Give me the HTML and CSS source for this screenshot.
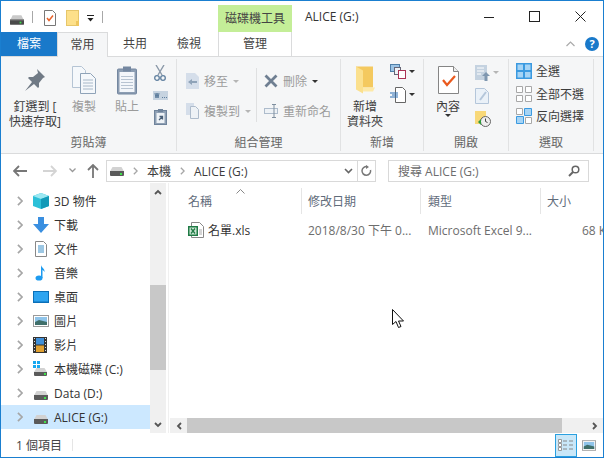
FILE: index.html
```html
<!DOCTYPE html>
<html>
<head>
    <title>ALICE (G:)</title>
    <link rel="stylesheet" href="styles.css">
</head>
<body>
    <svg class="defs" width="0" height="0">
        <symbol id="drive" viewBox="0 0 16 12">
            <path d="M3 1h10l3 6H0z" fill="#c9c9c9"/>
            <path d="M0 6h16v5a1 1 0 0 1-1 1H1a1 1 0 0 1-1-1z" fill="#4a4a4a"/>
            <path d="M0 6h16v1H0z" fill="#8a8a8a"/>
            <rect x="11" y="8.500" width="2" height="2" fill="#3fe04a"/>
        </symbol>
        <symbol id="chev" viewBox="0 0 7 12">
            <path d="M1 1l5 5-5 5" fill="none" stroke="#a6a6a6" stroke-width="2"/>
        </symbol>
        <symbol id="photo" viewBox="0 0 16 12">
            <rect x=".5" y=".5" width="15" height="11" fill="#fff" stroke="#9a9a9a"/>
            <rect x="2" y="2" width="12" height="8" fill="#8fc4ea"/>
            <path d="M2 7l4-2 8 2v3H2z" fill="#3f6f6a"/>
        </symbol>
        <symbol id="disk-body" viewBox="0 0 14 9">
            <path d="M2.500 0h9L14 4.500H0z" fill="#d2d2d2"/>
            <path d="M0 4h14v4a1 1 0 0 1-1 1H1a1 1 0 0 1-1-1z" fill="#5a5a5a"/>
            <rect x="10" y="6" width="2" height="2" fill="#3fe04a"/>
        </symbol>
    </svg>

    <div class="window">
        <div class="titlebar">
            <svg class="qa-drive" width="14" height="11"><use href="#drive"/></svg>
            <span class="qa-sep"></span>
            <svg class="qa-doc" width="12" height="16" viewBox="0 0 12 16">
                <path d="M.5.500h8l3 3v12H.5z" fill="#fff" stroke="#777"/>
                <path d="M3 8l2 2.500L9 5.500" fill="none" stroke="#e8622a" stroke-width="1.500"/>
            </svg>
            <svg class="qa-folder" width="13" height="16" viewBox="0 0 13 16">
                <rect x=".5" y=".5" width="12" height="15" fill="#fde08a" stroke="#e6c66a"/>
                <rect x="10" y="11" width="3" height="5" fill="#eec65e"/>
            </svg>
            <svg class="qa-drop" width="7" height="7" viewBox="0 0 7 7">
                <path d="M0 0h7v1H0zM.5 3h6L3.500 6.500z" fill="#222"/>
            </svg>
            <span class="qa-sep qa-sep-last"></span>
            <div class="tool-title">磁碟機工具</div>
            <div class="win-title">ALICE (G:)</div>
            <div class="win-controls">
                <svg width="10" height="10" viewBox="0 0 10 10"><path d="M0 5.500h10" stroke="#222"/></svg>
                <svg width="11" height="11" viewBox="0 0 11 11"><rect x=".5" y=".5" width="10" height="10" fill="none" stroke="#222"/></svg>
                <svg width="11" height="11" viewBox="0 0 11 11"><path d="M.5.500l10 10M10.500.500l-10 10" stroke="#222"/></svg>
            </div>
        </div>

        <div class="tabs">
            <div class="tab tab-file">檔案</div>
            <div class="tab tab-active">常用</div>
            <div class="tab tab-plain">共用</div>
            <div class="tab tab-plain">檢視</div>
            <div class="tab tab-tool">管理</div>
            <div class="tabs-right">
                <svg width="9" height="6" viewBox="0 0 9 6"><path d="M.5 5l4-4 4 4" fill="none" stroke="#aaa" stroke-width="1.200"/></svg>
                <div class="help">?</div>
            </div>
        </div>

        <div class="ribbon">
            <div class="group group-clip">
                <div class="group-body">
                    <div class="big big-pin">
                        <svg class="big-icon" width="22" height="22" viewBox="0 0 22 22">
                            <path d="M13 0l8 8-2 1-4 5v4l-1 1-4-4-9 7 7-9-4-4 1-1h4l5-4z" fill="#707a85"/>
                        </svg>
                        <div class="big-text">釘選到 [<br>快速存取]</div>
                    </div>
                    <div class="big big-copy dim">
                        <svg class="big-icon" width="24" height="28" viewBox="0 0 24 28">
                            <path d="M.5.500h9l4 4v17H.5z" fill="#f5f8fb" stroke="#b5c4d4"/>
                            <path d="M8.500 7.500h10l5 5v15h-15z" fill="#f5f8fb" stroke="#8fa3b8"/>
                            <path d="M11 14h10M11 17h10M11 20h10M11 23h10" stroke="#a8b8c8"/>
                        </svg>
                        <div class="big-text">複製</div>
                    </div>
                    <div class="big big-paste dim">
                        <svg class="big-icon" width="20" height="29" viewBox="0 0 20 29">
                            <rect x=".5" y="3.500" width="19" height="25" rx="1" fill="#8c9db2" stroke="#7487a0"/>
                            <rect x="2.500" y="6.500" width="15" height="20" fill="#f3f6fa"/>
                            <path d="M4 11h12M4 14h12M4 17h12M4 20h12M4 23h12" stroke="#b7c3d1"/>
                            <rect x="6" y="1" width="8" height="5" fill="#7487a0"/>
                        </svg>
                        <div class="big-text">貼上</div>
                    </div>
                    <div class="clip-tools">
                        <svg width="12" height="16" viewBox="0 0 12 16">
                            <path d="M2 0l6 10M10 0L4 10" stroke="#8a98a8" stroke-width="1.400"/>
                            <circle cx="3" cy="13" r="2.300" fill="none" stroke="#5f7f9f" stroke-width="1.300"/>
                            <circle cx="9" cy="13" r="2.300" fill="none" stroke="#5f7f9f" stroke-width="1.300"/>
                        </svg>
                        <svg width="15" height="9" viewBox="0 0 15 9">
                            <rect width="15" height="9" fill="#c6d3e0"/>
                            <path d="M2 2l1 5 1-5 1 5 1-5M9 6.500h1M11 6.500h1M13 6.500h1" fill="none" stroke="#44688c" stroke-width=".8"/>
                        </svg>
                        <svg width="13" height="16" viewBox="0 0 13 16">
                            <rect x=".5" y="1.500" width="12" height="14" fill="#8fa0b4" stroke="#6f839b"/>
                            <rect x="2.500" y="4" width="8" height="10" fill="#eef2f6"/>
                            <path d="M5 11l3-3M5.500 7.500H8.500v3" fill="none" stroke="#4a6078" stroke-width="1.300"/>
                            <rect x="4" y="0" width="5" height="3" fill="#6f839b"/>
                        </svg>
                    </div>
                </div>
                <div class="group-label">剪貼簿</div>
            </div>

            <div class="group group-org">
                <div class="group-body">
                    <div class="org-col">
                        <div class="small-row dim">
                            <svg width="13" height="16" viewBox="0 0 13 16">
                                <path d="M0 0h9l4 4v12H0z" fill="#d5deea"/>
                                <path d="M2 9l4-3v2h5v2H6v2z" fill="#8fa3b8"/>
                            </svg>
                            <span>移至</span><i class="caret caret-dim"></i>
                        </div>
                        <div class="small-row dim">
                            <svg width="13" height="16" viewBox="0 0 13 16">
                                <path d="M0 0h8v12H0z" fill="#d5deea"/>
                                <path d="M4.500 3.500h5l3 3v9h-8z" fill="#eef2f6" stroke="#aebccc"/>
                            </svg>
                            <span>複製到</span><i class="caret caret-dim"></i>
                        </div>
                    </div>
                    <span class="org-line"></span>
                    <div class="org-col org-col-right">
                        <div class="small-row dim">
                            <svg width="14" height="14" viewBox="0 0 14 14">
                                <path d="M1.500 1.500l11 11M12.500 1.500l-11 11" stroke="#6f7f92" stroke-width="2.800"/>
                            </svg>
                            <span>刪除</span><i class="caret"></i>
                        </div>
                        <div class="small-row dim">
                            <svg width="14" height="14" viewBox="0 0 14 14">
                                <rect x=".5" y="4.500" width="13" height="5" fill="#eef2f6" stroke="#aebccc"/>
                                <path d="M10 0v14M8 .5h4M8 13.500h4" stroke="#7f8f9f"/>
                            </svg>
                            <span>重新命名</span>
                        </div>
                    </div>
                </div>
                <div class="group-label">組合管理</div>
            </div>

            <div class="group group-new">
                <div class="group-body">
                    <div class="big big-48">
                        <svg class="big-icon" width="19" height="27" viewBox="0 0 19 27">
                            <path d="M0 0h17v21H0z" fill="#f4c95f"/>
                            <path d="M0 0l7 4v23l-7-4z" fill="#fbe08e"/>
                            <path d="M7 21h12l-2 4H7z" fill="#fde9a8"/>
                        </svg>
                        <div class="big-text">新增<br>資料夾</div>
                    </div>
                    <div class="small-col">
                        <div class="icon-row">
                            <svg width="16" height="15" viewBox="0 0 16 15">
                                <rect x=".5" y=".5" width="9" height="7" fill="#9cc4e6" stroke="#4f7fa8"/>
                                <rect x="4.500" y="3.500" width="6" height="7" fill="#eef2f6" stroke="#667"/>
                                <rect x="8.500" y="6.500" width="7" height="8" fill="#fff" stroke="#a35"/>
                            </svg>
                            <i class="caret"></i>
                        </div>
                        <div class="icon-row">
                            <svg width="16" height="16" viewBox="0 0 16 16">
                                <path d="M5.500.500h7l3 3v12h-10z" fill="#fff" stroke="#666"/>
                                <path d="M0 6h8M2 8h6M0 10h8" stroke="#2b6fb5"/>
                            </svg>
                            <i class="caret"></i>
                        </div>
                    </div>
                </div>
                <div class="group-label">新增</div>
            </div>

            <div class="group group-open">
                <div class="group-body">
                    <div class="big big-48">
                        <svg class="big-icon" width="21" height="28" viewBox="0 0 21 28">
                            <path d="M.5.500h15l5 5v22H.5z" fill="#fff" stroke="#858585"/>
                            <path d="M15.500.500v5h5" fill="#eee" stroke="#858585"/>
                            <path d="M5 14l4 5 8-9" fill="none" stroke="#ea5a1e" stroke-width="2.200"/>
                        </svg>
                        <div class="big-text">內容</div>
                        <i class="caret caret-under"></i>
                    </div>
                    <div class="small-col small-col-open">
                        <div class="icon-row dim">
                            <svg width="15" height="16" viewBox="0 0 15 16">
                                <rect width="12" height="15" fill="#c4d2e0"/>
                                <path d="M2 3h7M2 6h7M2 9h4" stroke="#fff"/>
                                <path d="M11 7l4 4h-2.500v5h-3v-5H7z" fill="#7f97b0"/>
                            </svg>
                            <i class="caret caret-dim"></i>
                        </div>
                        <div class="icon-row dim">
                            <svg width="14" height="16" viewBox="0 0 14 16">
                                <path d="M.5.500h9l4 4v11H.5z" fill="#eaf1f8" stroke="#b4c6da"/>
                                <path d="M5 12l6-8" stroke="#b4c6da" stroke-width="2"/>
                            </svg>
                        </div>
                        <div class="icon-row">
                            <svg width="16" height="16" viewBox="0 0 16 16">
                                <rect width="11" height="13" fill="#f8d878"/>
                                <circle cx="10.500" cy="10.500" r="5" fill="#eee" stroke="#666"/>
                                <path d="M10.500 7.500v3l2 1" fill="none" stroke="#444"/>
                                <path d="M3 11l3-3v6z" fill="#2e9a3e"/>
                            </svg>
                        </div>
                    </div>
                </div>
                <div class="group-label">開啟</div>
            </div>

            <div class="group group-select">
                <div class="group-body select-rows">
                    <div class="select-row">
                        <svg width="16" height="16" viewBox="0 0 16 16">
                            <path d="M0 0h16v16H0z" fill="#3b9ae0"/>
                            <path d="M1.500 1.500h5.500v5.500H1.500zM9 1.500h5.500v5.500H9zM1.500 9h5.500v5.500H1.500zM9 9h5.500v5.500H9z" fill="#a6d4f5"/>
                        </svg>
                        <span>全選</span>
                    </div>
                    <div class="select-row">
                        <svg width="16" height="16" viewBox="0 0 16 16">
                            <path d="M.5.500h6v6h-6zM9.500.500h6v6h-6zM.5 9.500h6v6h-6zM9.500 9.500h6v6h-6z" fill="#fff" stroke="#a8a8a8"/>
                        </svg>
                        <span>全部不選</span>
                    </div>
                    <div class="select-row">
                        <svg width="16" height="16" viewBox="0 0 16 16">
                            <path d="M.5.500h6v6h-6zM9.500 9.500h6v6h-6z" fill="#fff" stroke="#a8a8a8"/>
                            <path d="M8.500.500h7v7h-7zM.5 8.500h7v7h-7z" fill="#a6d4f5" stroke="#3b9ae0"/>
                        </svg>
                        <span>反向選擇</span>
                    </div>
                </div>
                <div class="group-label">選取</div>
            </div>
        </div>

        <div class="addressbar">
            <svg class="nav-back" width="14" height="12" viewBox="0 0 14 12"><path d="M6 1L1 6l5 5M1 6h13" fill="none" stroke="#777" stroke-width="1.800"/></svg>
            <svg class="nav-forward" width="14" height="12" viewBox="0 0 14 12"><path d="M8 1l5 5-5 5M13 6H0" fill="none" stroke="#d4d4d4" stroke-width="1.800"/></svg>
            <svg class="nav-down" width="7" height="5" viewBox="0 0 7 5"><path d="M.5.500l3 3 3-3" fill="none" stroke="#999" stroke-width="1.300"/></svg>
            <svg class="nav-up" width="12" height="14" viewBox="0 0 12 14"><path d="M1 6l5-5 5 5M6 1v13" fill="none" stroke="#777" stroke-width="1.800"/></svg>
            <div class="path-box">
                <svg class="path-drive" width="14" height="9"><use href="#disk-body"/></svg>
                <svg class="path-chev" width="5" height="8"><use href="#chev"/></svg>
                <span class="path-part">本機</span>
                <svg class="path-chev" width="5" height="8"><use href="#chev"/></svg>
                <span class="path-part">ALICE (G:)</span>
                <svg class="path-drop" width="9" height="6" viewBox="0 0 9 6"><path d="M1 1l3.500 3.500L8 1" fill="none" stroke="#666" stroke-width="1.600"/></svg>
                <div class="path-refresh">
                    <svg width="11" height="12" viewBox="0 0 11 12"><path d="M9.500 5a4.300 4.300 0 1 1-3-3.200" fill="none" stroke="#777" stroke-width="1.500"/><path d="M5 0l3 2-3 2z" fill="#777"/></svg>
                </div>
            </div>
            <div class="search-box">
                <span>搜尋 ALICE (G:)</span>
                <svg width="12" height="12" viewBox="0 0 12 12"><circle cx="7.500" cy="4.500" r="3.300" fill="none" stroke="#666" stroke-width="1.500"/><path d="M5 7l-4 4" stroke="#666" stroke-width="2"/></svg>
            </div>
        </div>

        <div class="main">
            <div class="tree">
                <div class="tree-row">
                    <svg width="6" height="10"><use href="#chev"/></svg>
                    <svg width="16" height="16" viewBox="0 0 16 16">
                        <path d="M8 0l8 3v10l-8 3-8-3V3z" fill="#2cc0d8"/>
                        <path d="M0 3l8 3 8-3-8-3z" fill="#9ce8f2"/>
                        <path d="M8 6v10l8-3V3z" fill="#129ab8"/>
                    </svg>
                    <span>3D 物件</span>
                </div>
                <div class="tree-row">
                    <svg width="6" height="10"><use href="#chev"/></svg>
                    <svg width="16" height="16" viewBox="0 0 16 16">
                        <path d="M5 0h6v7h5l-8 9-8-9h5z" fill="#3a8fe0"/>
                    </svg>
                    <span>下載</span>
                </div>
                <div class="tree-row">
                    <svg width="6" height="10"><use href="#chev"/></svg>
                    <svg width="16" height="16" viewBox="0 0 16 16">
                        <path d="M2.500.500h8l3 3v12h-11z" fill="#fff" stroke="#888"/>
                        <path d="M5 5h6M5 7h6M5 9h6M5 11h6" stroke="#3a8fc8"/>
                    </svg>
                    <span>文件</span>
                </div>
                <div class="tree-row">
                    <svg width="6" height="10"><use href="#chev"/></svg>
                    <svg width="16" height="16" viewBox="0 0 16 16">
                        <ellipse cx="6" cy="13" rx="3.500" ry="2.600" fill="#1d9bf0"/>
                        <path d="M8 13V0c.5 3 4 3.500 3.500 7C10 5 9.500 5 9.500 5v8z" fill="#1d9bf0"/>
                    </svg>
                    <span>音樂</span>
                </div>
                <div class="tree-row">
                    <svg width="6" height="10"><use href="#chev"/></svg>
                    <svg width="16" height="12" viewBox="0 0 16 12">
                        <rect width="16" height="12" fill="#0a6fb8"/>
                        <rect x="1" y="1" width="14" height="9.500" fill="#2ea4f0"/>
                    </svg>
                    <span>桌面</span>
                </div>
                <div class="tree-row">
                    <svg width="6" height="10"><use href="#chev"/></svg>
                    <svg width="16" height="12"><use href="#photo"/></svg>
                    <span>圖片</span>
                </div>
                <div class="tree-row">
                    <svg width="6" height="10"><use href="#chev"/></svg>
                    <svg width="14" height="16" viewBox="0 0 14 16">
                        <rect width="14" height="16" fill="#333"/>
                        <rect x="3" y="1" width="8" height="6.500" fill="#3f8fd8"/>
                        <rect x="3" y="8.500" width="8" height="6.500" fill="#e0a030"/>
                        <path d="M1 1.500h1M1 4.500h1M1 7.500h1M1 10.500h1M1 13.500h1M12 1.500h1M12 4.500h1M12 7.500h1M12 10.500h1M12 13.500h1" stroke="#ddd"/>
                    </svg>
                    <span>影片</span>
                </div>
                <div class="tree-row">
                    <svg width="6" height="10"><use href="#chev"/></svg>
                    <svg width="15" height="16" viewBox="0 0 15 16">
                        <path d="M0 0h3v3H0zM4 0h3v3H4zM0 4h3v3H0zM4 4h3v3H4z" fill="#18a8f0"/>
                        <path d="M3.500 7h8L14 11H1z" fill="#d2d2d2"/>
                        <path d="M1 11h13v3a1 1 0 0 1-1 1H2a1 1 0 0 1-1-1z" fill="#5a5a5a"/>
                        <rect x="11" y="12" width="2" height="2" fill="#3fe04a"/>
                    </svg>
                    <span>本機磁碟 (C:)</span>
                </div>
                <div class="tree-row">
                    <svg width="6" height="10"><use href="#chev"/></svg>
                    <svg class="tree-disk" width="14" height="9"><use href="#disk-body"/></svg>
                    <span>Data (D:)</span>
                </div>
                <div class="tree-row tree-row-on">
                    <svg width="6" height="10"><use href="#chev"/></svg>
                    <svg class="tree-disk" width="14" height="9"><use href="#disk-body"/></svg>
                    <span>ALICE (G:)</span>
                </div>
            </div>

            <div class="vscroll">
                <div class="vscroll-btn">
                    <svg width="8" height="6" viewBox="0 0 8 6"><path d="M1 5l3-3 3 3" fill="none" stroke="#555" stroke-width="1.800"/></svg>
                </div>
                <div class="vscroll-track"><div class="vscroll-thumb"></div></div>
                <div class="vscroll-btn">
                    <svg width="8" height="6" viewBox="0 0 8 6"><path d="M1 1l3 3 3-3" fill="none" stroke="#555" stroke-width="1.800"/></svg>
                </div>
            </div>

            <div class="content">
                <div class="list">
                    <div class="list-head">
                        <div class="col col-name">名稱</div>
                        <div class="col col-date">修改日期</div>
                        <div class="col col-type">類型</div>
                        <div class="col col-size">大小</div>
                        <svg class="sort-arrow" width="9" height="5" viewBox="0 0 9 5"><path d="M.5 4.500l4-4 4 4" fill="none" stroke="#888"/></svg>
                    </div>
                    <div class="list-row">
                        <div class="col col-name">
                            <svg width="16" height="16" viewBox="0 0 16 16">
                                <path d="M3.500.500h8l4 4v11h-12z" fill="#fff" stroke="#888"/>
                                <path d="M11 8h3M11 10h3M11 12h3" stroke="#aaa"/>
                                <rect y="4" width="10" height="10" fill="#1f7a45"/>
                                <rect x="1.500" y="5.500" width="7" height="7" fill="#cfe8d6"/>
                                <path d="M3 6.500l4 5M7 6.500l-4 5" stroke="#1f7a45" stroke-width="1.300"/>
                            </svg>
                            <span class="file-name">名單.xls</span>
                        </div>
                        <div class="col col-date">2018/8/30 下午 0...</div>
                        <div class="col col-type">Microsoft Excel 9...</div>
                        <div class="col col-size">68 KB</div>
                    </div>
                </div>
                <div class="hscroll">
                    <div class="hscroll-btn hscroll-left">
                        <svg width="6" height="8" viewBox="0 0 6 8"><path d="M5 1L2 4l3 3" fill="none" stroke="#555" stroke-width="1.800"/></svg>
                    </div>
                    <div class="hscroll-thumb"></div>
                    <div class="hscroll-btn hscroll-right">
                        <svg width="6" height="8" viewBox="0 0 6 8"><path d="M1 1l3 3-3 3" fill="none" stroke="#555" stroke-width="1.800"/></svg>
                    </div>
                </div>
            </div>
        </div>

        <div class="statusbar">
            <span class="status-text">1 個項目</span>
            <span class="status-line"></span>
            <div class="view-btn">
                <svg width="16" height="12" viewBox="0 0 16 12">
                    <path d="M.5.500h3v3h-3zM.5 4.500h3v3h-3zM.5 8.500h3v3h-3z" fill="#fff" stroke="#999"/>
                    <path d="M5 2h4M11 2h4M5 6h4M11 6h4M5 10h4M11 10h4" stroke="#888"/>
                </svg>
            </div>
            <svg class="view-photo" width="14" height="11"><use href="#photo"/></svg>
        </div>

        <svg class="cursor" width="13" height="20" viewBox="0 0 13 20">
            <path d="M.5.500v15l3.500-3 2.500 6 2.500-1-2.500-5.500h5z" fill="#fff" stroke="#111"/>
        </svg>
    </div>
</body>
</html>
```

FILE: styles.css
```css
* {
    box-sizing: border-box;
}

body {
    margin: 0;
    background: #fff;
    font-family: "Open Sans", "Noto Sans CJK TC", sans-serif;
    font-size: 12px;
    color: #3c3c3c;
}

svg {
    display: block;
    flex: none;
}

.defs {
    position: absolute;
}

.window {
    position: relative;
    width: 604px;
    height: 458px;
    border: 1px solid #1a7fd0;
    background: #fff;
    display: flex;
    flex-direction: column;
    overflow: hidden;
}

/* title bar */
.titlebar {
    height: 31px;
    display: flex;
    align-items: center;
    flex: none;
}

.qa-drive {
    margin: 5px 0 0 9px;
}

.qa-sep {
    width: 1px;
    height: 12px;
    margin: 0 0 0 8px;
    background: #a8a8a8;
}

.qa-doc {
    margin: 2px 0 0 11px;
}

.qa-folder {
    margin: 2px 0 0 10px;
}

.qa-drop {
    margin: 4px 0 0 8px;
}

.qa-sep-last {
    margin-left: 8px;
}

.tool-title {
    align-self: flex-end;
    width: 74px;
    height: 27px;
    margin-left: 115px;
    background: #c4ee98;
    text-align: center;
    line-height: 28px;
    color: #444;
}

.win-title {
    margin-left: 13px;
    color: #333;
}

.win-controls {
    margin-left: auto;
    width: 120px;
    padding: 0 17px 0 1px;
    display: flex;
    justify-content: space-between;
    align-items: center;
}

/* tabs */
.tabs {
    height: 24px;
    display: flex;
    flex: none;
}

.tab {
    text-align: center;
    line-height: 24px;
    color: #444;
}

.tab-file {
    width: 56px;
    background: #1979ca;
    color: #fff;
}

.tab-active {
    position: relative;
    z-index: 1;
    width: 51px;
    height: 25px;
    background: #f5f6f7;
    border: 1px solid #dadbdc;
    border-bottom: 0;
    line-height: 23px;
}

.tab-plain {
    width: 54px;
}

.tab-tool {
    width: 74px;
    margin-left: 2px;
    border-left: 1px solid #dadbdc;
    border-right: 1px solid #dadbdc;
}

.tabs-right {
    margin-left: auto;
    display: flex;
    align-items: center;
    gap: 10px;
    padding-right: 4px;
}

.help {
    width: 14px;
    height: 14px;
    border-radius: 50%;
    background: #1979ca;
    color: #fff;
    font-weight: bold;
    font-size: 11px;
    line-height: 14px;
    text-align: center;
}

/* ribbon */
.ribbon {
    height: 98px;
    flex: none;
    display: flex;
    background: #f5f6f7;
    border-top: 1px solid #dadbdc;
    border-bottom: 1px solid #dadbdc;
}

.group {
    margin: 2px 0;
    display: flex;
    flex-direction: column;
    border-right: 1px solid #e1e2e3;
}

.group-clip {
    width: 176px;
}

.group-org {
    width: 164px;
}

.group-new {
    width: 83px;
}

.group-open {
    width: 85px;
}

.group-select {
    width: 85px;
}

.group-body {
    flex: 1;
    display: flex;
    min-height: 0;
}

.group-label {
    height: 17px;
    line-height: 17px;
    text-align: center;
    color: #666;
}

.big {
    position: relative;
    display: flex;
    flex-direction: column;
    align-items: center;
    padding-top: 6px;
    text-align: center;
    line-height: 15px;
}

.big-icon {
    height: 30px;
    margin-bottom: 4px;
}

.big-pin {
    width: 68px;
}

.big-copy {
    width: 30px;
}

.big-paste {
    width: 30px;
    margin-left: 13px;
}

.big-48 {
    width: 48px;
}

.big-text {
    white-space: nowrap;
}

.dim {
    color: #9b9b9b;
}

.clip-tools {
    width: 20px;
    margin-left: 8px;
    padding-top: 6px;
    height: 66px;
    display: flex;
    flex-direction: column;
    align-items: center;
    justify-content: space-between;
}

.org-col {
    width: 79px;
    padding: 7px 0 0 9px;
}

.org-col-right {
    width: 83px;
    padding-left: 7px;
}

.org-line {
    width: 1px;
    height: 54px;
    margin-top: 9px;
    background: #dfe0e1;
}

.small-row {
    height: 30px;
    display: flex;
    align-items: center;
    gap: 5px;
    white-space: nowrap;
}

.caret {
    width: 0;
    height: 0;
    border-left: 3px solid transparent;
    border-right: 3px solid transparent;
    border-top: 3px solid #333;
}

.caret-dim {
    border-top-color: #b5b5b5;
}

.caret-under {
    position: absolute;
    top: 55px;
}

.small-col {
    margin-left: 1px;
    padding-top: 1px;
}

.small-col-open {
    margin-left: 3px;
    padding-top: 2px;
}

.icon-row {
    height: 23px;
    display: flex;
    align-items: center;
    gap: 3px;
}

.select-rows {
    flex-direction: column;
    padding: 1px 0 0 7px;
}

.select-row {
    height: 22.5px;
    display: flex;
    align-items: center;
    gap: 4px;
    white-space: nowrap;
}

/* address bar */
.addressbar {
    height: 29px;
    flex: none;
    padding-top: 6px;
    display: flex;
    align-items: flex-start;
}

.nav-back {
    margin: 5px 0 0 12px;
}

.nav-forward {
    margin: 5px 0 0 16px;
}

.nav-down {
    margin: 8px 0 0 12px;
}

.nav-up {
    margin: 4px 0 0 11px;
}

.path-box {
    width: 270px;
    height: 22px;
    margin-left: 7px;
    border: 1px solid #d9d9d9;
    display: flex;
    align-items: center;
}

.path-drive {
    margin-left: 3px;
}

.path-chev {
    margin: 0 9px;
}

.path-part {
    white-space: nowrap;
}

.path-drop {
    margin-left: auto;
    margin-right: 4px;
}

.path-refresh {
    width: 18px;
    height: 20px;
    border-left: 1px solid #d9d9d9;
    display: flex;
    align-items: center;
    justify-content: center;
}

.search-box {
    width: 201px;
    height: 22px;
    margin-left: 12px;
    padding: 0 8px 0 9px;
    border: 1px solid #d9d9d9;
    display: flex;
    align-items: center;
    justify-content: space-between;
    color: #6d6d6d;
}

/* main area */
.main {
    height: 250px;
    flex: none;
    display: flex;
}

.tree {
    width: 149px;
    padding-top: 6px;
    flex: none;
}

.tree-row {
    height: 24px;
    padding-left: 16px;
    display: grid;
    grid-template-columns: 16px 21px 1fr;
    align-items: center;
    white-space: nowrap;
    color: #333;
}

.tree-row-on {
    background: #cce8ff;
}

.tree-disk {
    margin: 4px 0 0 1px;
}

.vscroll {
    width: 16px;
    flex: none;
    background: #f0f0f0;
    display: flex;
    flex-direction: column;
}

.vscroll-btn {
    height: 17px;
    flex: none;
    display: flex;
    align-items: center;
    justify-content: center;
}

.vscroll-track {
    flex: 1;
    padding-top: 85px;
}

.vscroll-thumb {
    height: 85px;
    background: #c8c8c8;
}

.content {
    flex: 1;
    min-width: 0;
    margin-left: 2px;
    border-left: 1px solid #f0f0f0;
    display: flex;
    flex-direction: column;
    overflow: hidden;
}

.list {
    flex: 1;
    padding-top: 5px;
}

.list-head {
    position: relative;
    height: 26px;
    display: flex;
    color: #5f6b7a;
}

.list-head .col {
    padding-top: 1px;
    line-height: 26px;
    border-right: 1px solid #e5e5e5;
}

.list-row {
    height: 24px;
    margin-top: 4px;
    display: flex;
    align-items: center;
    color: #6d6d6d;
}

.col {
    flex: none;
    white-space: nowrap;
}

.col-name {
    width: 133px;
    padding-left: 19px;
    display: flex;
    align-items: center;
    gap: 4px;
}

.col-date {
    width: 119px;
    padding-left: 6px;
}

.col-type {
    width: 120px;
    padding-left: 7px;
}

.col-size {
    width: 62px;
    padding-left: 6px;
}

.list-row .col-size {
    padding-left: 41px;
}

.list-head .col-size {
    border-right: 0;
}

.file-name {
    color: #333;
}

.sort-arrow {
    position: absolute;
    left: 67px;
    top: 1px;
}

.hscroll {
    height: 15px;
    margin-left: 1px;
    flex: none;
    display: flex;
    background: #f0f0f0;
}

.hscroll-btn {
    display: flex;
    align-items: center;
}

.hscroll-left {
    width: 17px;
    justify-content: center;
}

.hscroll-thumb {
    width: 375px;
    background: #c8c8c8;
}

.hscroll-right {
    flex: 1;
    justify-content: flex-end;
    padding-right: 5px;
}

/* status bar */
.statusbar {
    flex: 1;
    display: flex;
    align-items: center;
    padding-left: 15px;
    color: #444;
}

.status-text {
    width: 56px;
    white-space: nowrap;
}

.status-line {
    width: 1px;
    height: 12px;
    background: #e5e5e5;
}

.view-btn {
    width: 22px;
    height: 23px;
    margin-left: auto;
    background: #c9e7f8;
    border: 1px solid #2aa0e0;
    display: flex;
    align-items: center;
    justify-content: center;
}

.view-photo {
    margin: 0 7px 0 5px;
}

/* mouse pointer over the file list */
.cursor {
    position: absolute;
    left: 391px;
    top: 308px;
}
```
